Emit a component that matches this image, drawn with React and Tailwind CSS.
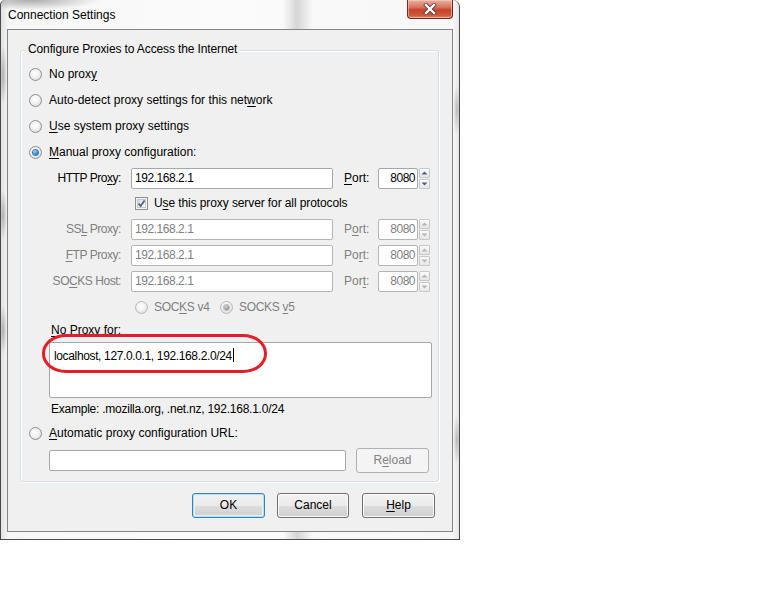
import React from "react";

function Radio({ checked = false, disabled = false }) {
  const ring = disabled ? "border-[#b9b9b9]" : "border-[#8e8f8f]";
  return (
    <span
      className={`relative flex h-[13px] w-[13px] shrink-0 items-center justify-center rounded-full border ${ring} bg-[radial-gradient(circle_at_45%_40%,#ffffff_0%,#f2f2f2_45%,#cfcfcf_100%)]`}
    >
      {checked && (
        <span
          className={
            disabled
              ? "h-[5px] w-[5px] rounded-full bg-[radial-gradient(circle_at_40%_35%,#d8d8d8_0%,#9a9a9a_60%,#7c7c7c_100%)] shadow-[0_0_0_1px_#bdbdbd]"
              : "h-[5px] w-[5px] rounded-full bg-[radial-gradient(circle_at_40%_35%,#a9dcff_0%,#2f86cf_55%,#0d3f78_100%)] shadow-[0_0_0_1px_#3f7fb9]"
          }
        />
      )}
    </span>
  );
}

function CheckBox() {
  return (
    <span className="flex h-[13px] w-[13px] shrink-0 items-center justify-center border border-[#8e8f8f] bg-[#f4f4f4]">
      <span className="relative flex h-[9px] w-[9px] items-center justify-center border border-[#c9c9c9] bg-[linear-gradient(135deg,#d8d8d8,#fdfdfd)]">
        <svg width="9" height="9" viewBox="0 0 9 9" className="absolute left-[-1px] top-[-1px]">
          <path d="M1.5 4.5 L3.6 7 L7.6 1.4" fill="none" stroke="#4a5f97" strokeWidth="1.7" />
        </svg>
      </span>
    </span>
  );
}

function Spinner({ disabled = false }) {
  const c = disabled ? "#b5b5b5" : "#4c5f87";
  const half =
    "flex h-[10px] w-[11px] items-center justify-center rounded-[1px] border border-[#c8c8c8] bg-[linear-gradient(#fafafa,#e6e6e6)]";
  return (
    <div className="ml-[1px] flex h-[21px] w-[11px] flex-col justify-between">
      <div className={half}>
        <svg width="7" height="4" viewBox="0 0 7 4">
          <path d="M0.5 3.5 L3.5 0.5 L6.5 3.5 Z" fill={c} />
        </svg>
      </div>
      <div className={half}>
        <svg width="7" height="4" viewBox="0 0 7 4">
          <path d="M0.5 0.5 L3.5 3.5 L6.5 0.5 Z" fill={c} />
        </svg>
      </div>
    </div>
  );
}

function ProxyRow({ label, disabled = false, portLabel }) {
  const textC = disabled ? "text-[#7f7f7f]" : "text-black";
  const border = disabled ? "border-[#b4b4b4]" : "border-[#a5a8ad]";
  return (
    <div className="flex h-[26px] items-center">
      <div className={`w-[100px] text-right tracking-[-0.45px] ${textC}`}>{label}</div>
      <div
        className={`ml-[10px] flex h-[21px] w-[202px] items-center rounded-[2px] border ${border} bg-white pl-[3px] tracking-[-0.45px] ${textC}`}
      >
        192.168.2.1
      </div>
      <div className={`ml-[11px] w-[34px] ${textC}`}>{portLabel}</div>
      <div
        className={`flex h-[21px] w-[40px] items-center justify-end rounded-[2px] border ${border} bg-white pr-[2px] tracking-[-0.5px] ${textC}`}
      >
        8080
      </div>
      <Spinner disabled={disabled} />
    </div>
  );
}

function WinButton({ children, def = false, disabled = false, w = "w-[73px]" }) {
  let cls;
  if (disabled) {
    cls = "border-[#adb2b5] bg-[#f4f4f4] text-[#838383]";
  } else if (def) {
    cls =
      "border-[#3c7fb1] bg-[linear-gradient(#f2f2f2_0%,#ebebeb_50%,#dddddd_51%,#cfcfcf_100%)] shadow-[inset_0_0_0_1px_#aee1fb,inset_0_0_0_2px_#e3f3fc] text-black";
  } else {
    cls =
      "border-[#707070] bg-[linear-gradient(#f2f2f2_0%,#ebebeb_50%,#dddddd_51%,#cfcfcf_100%)] shadow-[inset_0_0_0_1px_#fbfbfb] text-black";
  }
  return (
    <div className={`flex h-[25px] ${w} items-center justify-center rounded-[3px] border ${cls}`}>
      {children}
    </div>
  );
}

export default function App() {
  return (
    <div className="h-[614px] w-[768px] bg-white font-['Liberation_Sans',Arial,sans-serif] text-[12px] leading-[15px] text-black">
      <div className="flex h-[540px] w-[460px] flex-col rounded-tl-[5px] rounded-tr-[7px] border border-t-0 border-[#4a4a4a] bg-[radial-gradient(ellipse_70px_10px_at_30px_0px,rgba(80,80,80,0.45),transparent),linear-gradient(90deg,transparent_282px,rgba(120,120,120,0.28)_296px,transparent_312px),radial-gradient(ellipse_4px_30px_at_2px_75px,rgba(110,110,110,0.45),transparent),radial-gradient(ellipse_4px_25px_at_2px_215px,rgba(110,110,110,0.45),transparent),radial-gradient(ellipse_4px_25px_at_2px_330px,rgba(110,110,110,0.45),transparent),radial-gradient(ellipse_4px_25px_at_456px_110px,rgba(110,110,110,0.4),transparent),radial-gradient(ellipse_4px_25px_at_456px_440px,rgba(110,110,110,0.4),transparent),linear-gradient(90deg,#e2e2e2_0px,#f7f7f7_8px,#fbfbfb_50%,#f7f7f7_452px,#e2e2e2_460px)]">
        {/* title bar */}
        <div className="flex h-[29px] shrink-0 items-start justify-between">
          <div className="pl-[7px] pt-[8px] text-black">Connection Settings</div>
          <div className="mr-[6px] flex h-[19px] w-[46px] items-center justify-center rounded-b-[4px] border border-t-0 border-[#6b2c21] bg-[linear-gradient(#eab0a2_0%,#d8745f_40%,#c4432a_55%,#cf5838_85%,#e0846a_100%)] shadow-[inset_0_0_0_1px_rgba(255,210,200,0.55)]">
            <svg width="16" height="12" viewBox="0 0 16 12">
              <path
                d="M4 2 L12 10 M12 2 L4 10"
                fill="none"
                stroke="#5a3b37"
                strokeWidth="4"
                strokeLinecap="square"
              />
              <path
                d="M4 2 L12 10 M12 2 L4 10"
                fill="none"
                stroke="#ffffff"
                strokeWidth="2.3"
                strokeLinecap="square"
              />
            </svg>
          </div>
        </div>

        {/* client area */}
        <div className="ml-[6px] flex h-[503px] w-[446px] flex-col border border-[#858585] bg-[#f0f0f0]">
          {/* group box */}
          <div className="relative ml-[12px] mt-[20px] h-[432px] w-[419px] rounded-[3px] border border-[#d5dfe5] pb-[6px] pt-[10px] shadow-[inset_1px_1px_0_#ffffff,1px_1px_0_#ffffff]">
            <div className="absolute left-[5px] top-[-9px] bg-[#f0f0f0] px-[2px] tracking-[-0.12px] text-black">
              Configure Proxies to Access the Internet
            </div>

            <div className="flex h-[26px] items-center pl-[8px]">
              <Radio />
              <span className="ml-[7px]">
                No prox<u className="underline-offset-2">y</u>
              </span>
            </div>
            <div className="flex h-[26px] items-center pl-[8px]">
              <Radio />
              <span className="ml-[7px]">
                Auto-detect proxy settings for this net<u className="underline-offset-2">w</u>ork
              </span>
            </div>
            <div className="flex h-[26px] items-center pl-[8px]">
              <Radio />
              <span className="ml-[7px]">
                <u className="underline-offset-2">U</u>se system proxy settings
              </span>
            </div>
            <div className="flex h-[26px] items-center pl-[8px]">
              <Radio checked />
              <span className="ml-[7px]">
                <u className="underline-offset-2">M</u>anual proxy configuration:
              </span>
            </div>

            <ProxyRow
              label={
                <>
                  HTTP Pro<u className="underline-offset-2">x</u>y:
                </>
              }
              portLabel={
                <>
                  <u className="underline-offset-2">P</u>ort:
                </>
              }
            />

            <div className="flex h-[25px] items-center pl-[114px]">
              <CheckBox />
              <span className="ml-[6px] tracking-[-0.1px]">
                U<u className="underline-offset-2">s</u>e this proxy server for all protocols
              </span>
            </div>

            <ProxyRow
              disabled
              label={
                <>
                  SS<u className="underline-offset-2">L</u> Proxy:
                </>
              }
              portLabel={
                <>
                  P<u className="underline-offset-2">o</u>rt:
                </>
              }
            />
            <ProxyRow
              disabled
              label={
                <>
                  <u className="underline-offset-2">F</u>TP Proxy:
                </>
              }
              portLabel={
                <>
                  Po<u className="underline-offset-2">r</u>t:
                </>
              }
            />
            <ProxyRow
              disabled
              label={
                <>
                  SO<u className="underline-offset-2">C</u>KS Host:
                </>
              }
              portLabel={
                <>
                  Por<u className="underline-offset-2">t</u>:
                </>
              }
            />

            <div className="flex h-[26px] items-center pl-[114px] text-[#7f7f7f]">
              <div className="flex w-[85px] items-center">
                <Radio disabled />
                <span className="ml-[6px] tracking-[-0.3px]">
                  SOC<u className="underline-offset-2">K</u>S v4
                </span>
              </div>
              <Radio disabled checked />
              <span className="ml-[6px] tracking-[-0.3px]">
                SOCKS <u className="underline-offset-2">v</u>5
              </span>
            </div>

            <div className="flex h-[20px] items-center pl-[30px]">
              <span>
                <u className="underline-offset-2">N</u>o Proxy for:
              </span>
            </div>
            <div className="ml-[28px] mt-[2px] h-[56px] w-[383px] rounded-[2px] border border-[#a5a8ad] bg-white pl-[4px] pt-[3px]">
              <span className="tracking-[-0.36px]">localhost, 127.0.0.1, 192.168.2.0/24</span>
              <span className="ml-[1px] inline-block h-[14px] w-[1px] translate-y-[2px] bg-black" />
            </div>
            <div className="flex h-[22px] items-center pl-[30px] tracking-[-0.24px]">
              Example: .mozilla.org, .net.nz, 192.168.1.0/24
            </div>
            <div className="flex h-[26px] items-center pl-[8px]">
              <Radio />
              <span className="ml-[7px]">
                <u className="underline-offset-2">A</u>utomatic proxy configuration URL:
              </span>
            </div>
            <div className="flex h-[29px] items-center pl-[28px]">
              <div className="h-[21px] w-[297px] rounded-[2px] border border-[#a5a8ad] bg-white" />
              <div className="ml-[10px]">
                <WinButton disabled>
                  R<u className="underline-offset-2">e</u>load
                </WinButton>
              </div>
            </div>

            {/* red annotation */}
            <div className="pointer-events-none absolute left-[21px] top-[283px] h-[39px] w-[225px] rounded-[24px/19px] border-[3px] border-[#e41e26]" />
          </div>

          {/* buttons */}
          <div className="mt-[11px] flex justify-end pr-[17px]">
            <WinButton def>OK</WinButton>
            <div className="ml-[12px]">
              <WinButton w="w-[72px]">Cancel</WinButton>
            </div>
            <div className="ml-[13px]">
              <WinButton>
                <u className="underline-offset-2">H</u>elp
              </WinButton>
            </div>
          </div>
        </div>
      </div>
    </div>
  );
}
